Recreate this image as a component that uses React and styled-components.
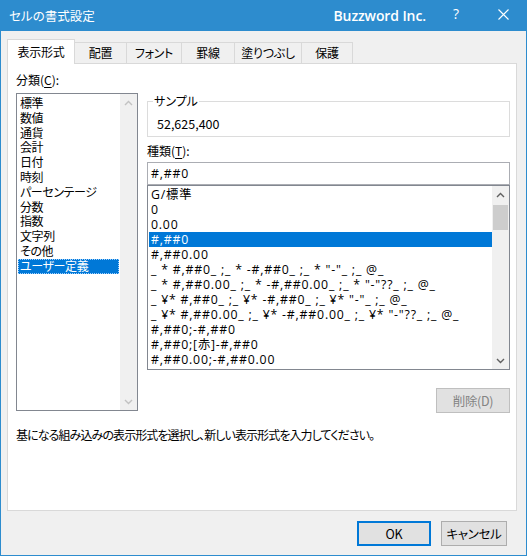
import React from 'react'
import styled, { createGlobalStyle } from 'styled-components'

const GlobalStyle = createGlobalStyle`
  html, body {
    margin: 0;
    padding: 0;
    background: #ffffff;
  }
  body {
    font-family: "Noto Sans CJK JP", "Noto Sans", sans-serif;
    font-feature-settings: "palt";
  }
`

const tabs = [
  { label: '表示形式', width: 68 },
  { label: '配置', width: 53 },
  { label: 'フォント', width: 56 },
  { label: '罫線', width: 54 },
  { label: '塗りつぶし', width: 68 },
  { label: '保護', width: 52 }
]

const categories = [
  '標準', '数値', '通貨', '会計', '日付', '時刻', 'パーセンテージ',
  '分数', '指数', '文字列', 'その他', 'ユーザー定義'
]

const formats = [
  'G/標準',
  '0',
  '0.00',
  '#,##0',
  '#,##0.00',
  '_ * #,##0_ ;_ * -#,##0_ ;_ * "-"_ ;_ @_',
  '_ * #,##0.00_ ;_ * -#,##0.00_ ;_ * "-"??_ ;_ @_',
  '_ ¥* #,##0_ ;_ ¥* -#,##0_ ;_ ¥* "-"_ ;_ @_',
  '_ ¥* #,##0.00_ ;_ ¥* -#,##0.00_ ;_ ¥* "-"??_ ;_ @_',
  '#,##0;-#,##0',
  '#,##0;[赤]-#,##0',
  '#,##0.00;-#,##0.00'
]

function Chevron({ up, disabled }) {
  return (
    <svg width="9" height="6" viewBox="0 0 9 6">
      <polyline
        points={up ? '1,5 4.5,1.5 8,5' : '1,1 4.5,4.5 8,1'}
        fill="none"
        stroke={disabled ? '#c2c2c2' : '#606060'}
        strokeWidth="1.4"
      />
    </svg>
  )
}

function ScrollBar({ disabled, thumb }) {
  return (
    <Track>
      <Arrow><Chevron up disabled={disabled} /></Arrow>
      <Rail>{thumb && <Thumb style={{ marginTop: thumb.top, height: thumb.height }} />}</Rail>
      <Arrow><Chevron disabled={disabled} /></Arrow>
    </Track>
  )
}

function App() {
  return (
    <>
      <GlobalStyle />
      <Window>
        <TitleBar>
          <Caption>セルの書式設定</Caption>
          <Brand>Buzzword Inc.</Brand>
          <Help>?</Help>
          <CloseBox>
            <svg width="11" height="11" viewBox="0 0 11 11">
              <path d="M0.5 0.5 L10.5 10.5 M10.5 0.5 L0.5 10.5" stroke="#ffffff" strokeWidth="1.1" />
            </svg>
          </CloseBox>
        </TitleBar>

        <TabRow>
          {tabs.map((t, i) => (
            <Tab key={t.label} $active={i === 0} $width={t.width}>{t.label}</Tab>
          ))}
        </TabRow>

        <Panel>
          <Columns>
            <div>
              <Label>分類(<u>C</u>):</Label>
              <ListBox $height={318}>
                <Items $top={2}>
                  {categories.map((c, i) => (
                    <CatItem key={c} $selected={i === categories.length - 1}>{c}</CatItem>
                  ))}
                </Items>
                <ScrollBar disabled />
              </ListBox>
            </div>

            <RightCol>
              <GroupBox>
                <Legend>サンプル</Legend>
                <SampleValue>52,625,400</SampleValue>
              </GroupBox>
              <Label $gap={4}>種類(<u>T</u>):</Label>
              <TextBox>#,##0</TextBox>
              <ListBox $height={185}>
                <Items $top={1}>
                  {formats.map((f, i) => (
                    <FormatItem key={f} $selected={i === 3}>{f}</FormatItem>
                  ))}
                </Items>
                <ScrollBar thumb={{ top: 2, height: 25 }} />
              </ListBox>
              <ButtonRow>
                <Button disabled>削除(D)</Button>
              </ButtonRow>
            </RightCol>

            <Hint>基になる組み込みの表示形式を選択し、新しい表示形式を入力してください。</Hint>
          </Columns>
        </Panel>

        <Footer>
          <Button $primary $width={74}>OK</Button>
          <Button $width={66}>キャンセル</Button>
        </Footer>
      </Window>
    </>
  )
}

export default App

const formatFont = `"Open Sans", "Noto Sans CJK JP", sans-serif`

const Window = styled.div`
  width: 527px;
  height: 556px;
  box-sizing: border-box;
  border: 1px solid #2d8cce;
  border-top: none;
  background: #f0f0f0;
  display: flex;
  flex-direction: column;
`

const TitleBar = styled.div`
  height: 31px;
  flex-shrink: 0;
  background: #2d8cce;
  color: #ffffff;
  display: flex;
  align-items: center;
  padding-left: 8px;
`

const Caption = styled.div`
  font-size: 12.5px;
  flex: 1;
  margin-top: -1px;
`

const Brand = styled.div`
  font-family: "Open Sans", "Liberation Sans", sans-serif;
  font-weight: 600;
  font-size: 14px;
  letter-spacing: -0.1px;
  margin-right: 7px;
`

const Help = styled.div`
  font-family: "Open Sans", "Liberation Sans", sans-serif;
  font-size: 14px;
  width: 46px;
  text-align: center;
  margin-top: -4px;
`

const CloseBox = styled.div`
  width: 46px;
  height: 31px;
  display: flex;
  align-items: center;
  justify-content: center;
  margin-top: -2px;
  margin-left: 1px;
`

const TabRow = styled.div`
  display: flex;
  align-items: flex-end;
  height: 25px;
  margin-top: 8px;
  padding-left: 6px;
  position: relative;
  z-index: 1;
`

const Tab = styled.div`
  box-sizing: border-box;
  width: ${p => p.$width}px;
  border: 1px solid #d9d9d9;
  border-bottom: none;
  font-size: 12px;
  letter-spacing: -0.3px;
  color: #000000;
  display: flex;
  align-items: center;
  justify-content: center;
  background: ${p => (p.$active ? '#ffffff' : '#f0f0f0')};
  height: ${p => (p.$active ? '25px' : '21px')};
  padding-bottom: ${p => (p.$active ? '2px' : '1px')};
  margin-bottom: ${p => (p.$active ? '0' : '1px')};
  & + & {
    margin-left: -1px;
  }
`

const Panel = styled.div`
  box-sizing: border-box;
  margin: -1px 0 0 6px;
  width: 510px;
  height: 448px;
  background: #ffffff;
  border: 1px solid #d9d9d9;
  padding: 9px 6px 0 8px;
`

const Columns = styled.div`
  display: grid;
  grid-template-columns: 122px 1fr;
  column-gap: 9px;
`

const RightCol = styled.div`
  display: flex;
  flex-direction: column;
  padding-top: 28px;
`

const Label = styled.div`
  font-size: 12px;
  line-height: 14px;
  margin-top: ${p => (p.$gap ? '7px' : '0')};
  margin-bottom: ${p => (p.$gap ? `${p.$gap}px` : '6px')};
  u {
    text-underline-offset: 2px;
  }
`

const ListBox = styled.div`
  box-sizing: border-box;
  height: ${p => p.$height}px;
  border: 1px solid #828790;
  display: grid;
  grid-template-columns: 1fr 17px;
  background: #ffffff;
`

const Items = styled.div`
  padding: ${p => p.$top}px 0 0 1px;
  overflow: hidden;
`

const Row = styled.div`
  white-space: nowrap;
  color: ${p => (p.$selected ? '#ffffff' : '#000000')};
  background: ${p => (p.$selected ? '#0078d7' : 'transparent')};
`

const CatItem = styled(Row)`
  font-size: 12px;
  letter-spacing: -0.4px;
  line-height: 14.8px;
  height: 14.8px;
  padding-left: 2px;
  margin-right: 1px;
  outline: ${p => (p.$selected ? '1px dotted #9fd0ff' : 'none')};
  outline-offset: -1px;
`

const FormatItem = styled(Row)`
  font-family: ${formatFont};
  font-size: 12.3px;
  letter-spacing: 0.8px;
  line-height: 15px;
  height: 15px;
  padding-left: 2px;
`

const Track = styled.div`
  background: #f0f0f0;
  display: flex;
  flex-direction: column;
`

const Arrow = styled.div`
  height: 17px;
  display: flex;
  align-items: center;
  justify-content: center;
  flex-shrink: 0;
`

const Rail = styled.div`
  flex: 1;
  display: flex;
  flex-direction: column;
  align-items: center;
`

const Thumb = styled.div`
  width: 15px;
  background: #cdcdcd;
`

const GroupBox = styled.div`
  position: relative;
  box-sizing: border-box;
  height: 36px;
  border: 1px solid #dcdcdc;
  padding: 15px 0 0 9px;
`

const Legend = styled.span`
  position: absolute;
  left: 5px;
  top: -8px;
  background: #ffffff;
  padding: 0 1px;
  font-size: 12px;
  line-height: 14px;
`

const SampleValue = styled.div`
  font-size: 12.5px;
  line-height: 14px;
`

const TextBox = styled.div`
  box-sizing: border-box;
  height: 23px;
  border: 1px solid #abadb3;
  padding: 0 3px;
  font-family: ${formatFont};
  font-size: 12.3px;
  letter-spacing: 0.8px;
  line-height: 21px;
`

const ButtonRow = styled.div`
  display: flex;
  justify-content: flex-end;
  margin-top: 18px;
`

const Button = styled.button`
  box-sizing: border-box;
  width: ${p => (p.$width ? `${p.$width}px` : '74px')};
  height: 25px;
  padding: 0;
  font-family: "Noto Sans CJK JP", "Noto Sans", sans-serif;
  font-feature-settings: "palt";
  font-size: 12.5px;
  letter-spacing: -0.3px;
  background: #e1e1e1;
  color: ${p => (p.disabled ? '#838383' : '#000000')};
  border: ${p => (p.$primary ? '2px solid #0078d7' : p.disabled ? '1px solid #bfbfbf' : '1px solid #adadad')};
`

const Hint = styled.div`
  grid-column: 1 / -1;
  margin-top: 15px;
  font-size: 12px;
  letter-spacing: -0.9px;
  line-height: 14px;
`

const Footer = styled.div`
  display: flex;
  justify-content: flex-end;
  gap: 10px;
  margin-top: 10px;
  padding-right: 19px;
`
